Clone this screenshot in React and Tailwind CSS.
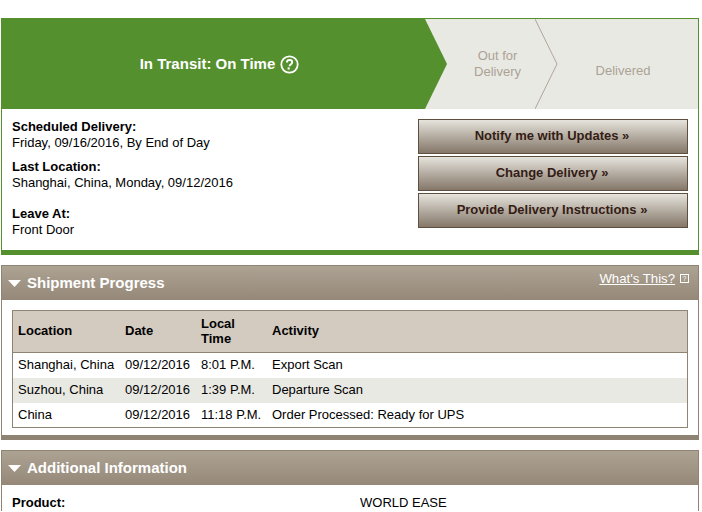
import React from "react";

const F = "font-['Liberation_Sans',Arial,sans-serif]";

function Caret() {
  return (
    <svg width="13" height="7" viewBox="0 0 13 7" className="shrink-0">
      <polygon points="0,0 13,0 6.5,7" fill="#ffffff" />
    </svg>
  );
}

function SectionHeader({ title, right }) {
  return (
    <div className="flex h-[34px] items-center justify-between bg-gradient-to-b from-[#ada393] to-[#958879] pl-[6px] pr-[9px]">
      <div className="flex items-center gap-[6px]">
        <Caret />
        <span className="text-[15px] font-bold text-white">{title}</span>
      </div>
      {right}
    </div>
  );
}

function ActionButton({ children }) {
  return (
    <button className="flex h-[35px] w-[270px] items-center justify-center border border-[#5e4f3e] bg-gradient-to-b from-[#e6e4dd] to-[#85786a] pb-[2px] pr-[2px] text-[13px] font-bold text-[#351c15]">
      {children}
    </button>
  );
}

const rows = [
  ["Shanghai, China", "09/12/2016", "8:01 P.M.", "Export Scan", false],
  ["Suzhou, China", "09/12/2016", "1:39 P.M.", "Departure Scan", true],
  ["China", "09/12/2016", "11:18 P.M.", "Order Processed: Ready for UPS", false],
];

export default function App() {
  return (
    <div className={`${F} h-[512px] w-[702px] overflow-hidden bg-white pl-px pr-[3px] pt-[18px] text-[13px] leading-[16px] text-black`}>
      <div className="border-x border-t border-[#55902f]">
        <div className="relative flex h-[90px] bg-[#e9e9e4]">
          <div className="flex w-[423px] items-center justify-center gap-[5px] bg-[#55902f] pl-[12px] text-[15px] font-bold text-white">
            <span>In Transit: On Time</span>
            <svg width="19" height="19" viewBox="0 0 19 19">
              <circle cx="9.5" cy="9.5" r="8.2" fill="none" stroke="#fff" strokeWidth="1.8" />
              <path d="M6.9 7.4c0-1.5 1.1-2.4 2.7-2.4s2.6.9 2.6 2.2c0 1.1-.6 1.6-1.4 2.2-.8.5-1.2.9-1.2 1.8" fill="none" stroke="#fff" strokeWidth="1.9" />
              <rect x="7.6" y="12.4" width="2.1" height="2.1" fill="#fff" />
            </svg>
          </div>
          <svg width="23" height="90" viewBox="0 0 23 90" className="shrink-0">
            <polygon points="0,0 22,45 0,90" fill="#55902f" />
          </svg>
          <div className="flex w-[87px] items-center justify-center pb-[1px] pl-[12px] text-center text-[13px] text-[#aba295]">
            <span className="mt-[1px]">Out for<br />Delivery</span>
          </div>
          <svg width="23" height="90" viewBox="0 0 23 90" className="shrink-0">
            <polyline points="0,0 22,45 0,90" fill="none" stroke="#b0a698" strokeWidth="1" />
          </svg>
          <div className="flex flex-1 items-center justify-center pr-[10px] pt-[14px] text-[#aba295]">
            <span>Delivered</span>
          </div>
        </div>
        <div className="flex h-[141px] justify-between pl-[10px] pr-[10px] pt-[10px]">
          <div>
            <div className="font-bold">Scheduled Delivery:</div>
            <div>Friday, 09/16/2016, By End of Day</div>
            <div className="mt-[8px] font-bold">Last Location:</div>
            <div>Shanghai, China, Monday, 09/12/2016</div>
            <div className="mt-[15px] font-bold">Leave At:</div>
            <div>Front Door</div>
          </div>
          <div className="flex flex-col gap-[2px]">
            <ActionButton>Notify me with Updates »</ActionButton>
            <ActionButton>Change Delivery »</ActionButton>
            <ActionButton>Provide Delivery Instructions »</ActionButton>
          </div>
        </div>
      </div>
      <div className="h-[5px] bg-[#55902f]" />

      <div className="mt-[10px] border-x border-t border-[#8f8373]">
        <SectionHeader
          title="Shipment Progress"
          right={
            <div className="-mt-[9px] flex items-center gap-[5px] text-[13.2px] text-white">
              <span className="underline">What's This?</span>
              <span className="flex h-[9px] w-[9px] items-center justify-center border border-white text-[7px] leading-none">?</span>
            </div>
          }
        />
        <div className="px-[10px] pb-[7px] pt-[10px]">
          <table className="w-[676px] table-fixed border-collapse border border-[#8f8373]">
            <colgroup>
              <col className="w-[107px]" />
              <col className="w-[76px]" />
              <col className="w-[71px]" />
              <col />
            </colgroup>
            <thead>
              <tr className="h-[42px] border-b border-[#8f8373] bg-[#d3cbc0] text-left text-[13px] font-bold">
                <th className="pb-[2px] pl-[5px]">Location</th>
                <th className="pb-[2px] pl-[5.5px]">Date</th>
                <th className="pb-[2px] pl-[5.5px] leading-[15px]">Local<br />Time</th>
                <th className="pb-[2px] pl-[5.5px]">Activity</th>
              </tr>
            </thead>
            <tbody>
              {rows.map((r) => (
                <tr key={r[0]} className={r[4] ? "h-[25px] bg-[#e9e9e4]" : "h-[25px]"}>
                  <td className="whitespace-nowrap pl-[5px]">{r[0]}</td>
                  <td className="pl-[5.5px]">{r[1]}</td>
                  <td className="whitespace-nowrap pl-[5.5px]">{r[2]}</td>
                  <td className="pl-[5.5px]">{r[3]}</td>
                </tr>
              ))}
            </tbody>
          </table>
        </div>
      </div>
      <div className="h-[5px] bg-[#8f8373]" />

      <div className="mt-[10px] border-x border-t border-[#8f8373]">
        <SectionHeader title="Additional Information" />
        <div className="flex pl-[10px] pt-[10px]">
          <div className="w-[348px] font-bold">Product:</div>
          <div>WORLD EASE</div>
        </div>
      </div>
    </div>
  );
}
